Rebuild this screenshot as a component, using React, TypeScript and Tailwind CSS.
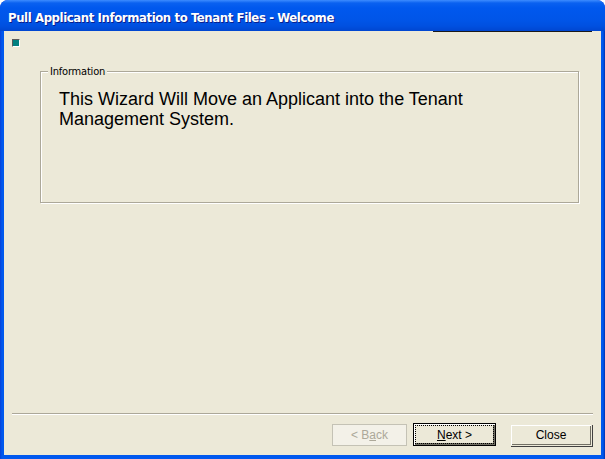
import React from "react";

export default function App() {
  return (
    <div className="w-[605px] h-[459px] overflow-hidden bg-white">
      <div className="w-[605px] h-[459px] flex flex-col rounded-t-[8px] overflow-hidden bg-[#0831d9]">
        {/* Title bar */}
        <div className="h-[31px] shrink-0 flex items-center pl-[8px] pt-[5px] bg-[linear-gradient(to_bottom,#3d8cff_0px,#0a61f0_3px,#0058ee_8px,#0055e8_20px,#0050e0_26px,#0046d0_31px)]">
          <span
            className="text-white text-[13px] font-bold tracking-[-0.4px] [text-shadow:1px_1px_0_#0a1e8c]"
            style={{ fontFamily: '"Trebuchet MS", "DejaVu Sans Condensed", "Liberation Sans", sans-serif' }}
          >
            Pull Applicant Information to Tenant Files - Welcome
          </span>
        </div>
        {/* Body with borders */}
        <div className="flex-1 flex px-[4px] pb-[4px] bg-[linear-gradient(to_right,#0840d8,#0058ee_2px,#0058ee_calc(100%-2px),#0030b0)]">
          <div
            className="flex-1 flex flex-col bg-[#ece9d8] relative"
            style={{ fontFamily: '"Liberation Sans", Arial, sans-serif' }}
          >
            <div className="absolute top-0 left-[429px] w-[159px] h-[1px] bg-[#1a1a1a]" />
            <div className="h-[8px]" />
            <div className="pl-[8px] flex">
              <div className="w-[8px] h-[8px] bg-[#008080] border-t border-l border-[#5a5a5a] border-r-white border-b-white" style={{ borderRightWidth: 1, borderBottomWidth: 1, borderRightStyle: "solid", borderBottomStyle: "solid" }} />
            </div>
            {/* Group box */}
            <div className="mt-[24px] ml-[36px] mr-[22px] h-[132px] relative border border-[#aca899] shadow-[inset_1px_1px_0_#fff,1px_1px_0_#fff]">
              <span
                className="absolute -top-[7px] left-[7px] px-[2px] bg-[#ece9d8] text-[11px] leading-[13px] text-black tracking-[-0.2px]"
                style={{ fontFamily: 'Tahoma, "DejaVu Sans Condensed", "Liberation Sans", sans-serif' }}
              >
                Information
              </span>
              <div className="pt-[17px] pl-[18px] text-[18px] leading-[20px] text-black">
                This Wizard Will Move an Applicant into the Tenant
                <br />
                Management System.
              </div>
            </div>
            <div className="flex-1" />
            {/* Separator */}
            <div className="mx-[8px] h-[2px] border-t border-[#aca899]" style={{ borderBottomWidth: 1, borderBottomStyle: "solid", borderBottomColor: "#fff" }} />
            <div className="flex justify-end items-center pt-[8px] pb-[9px] pr-[9px] gap-0 text-[12px]">
              <div className="w-[75px] h-[22px] flex items-center justify-center text-[#aca899] border border-[#c4c2b5] bg-[#f3f1e8]">
                <span>
                  &lt; B<span className="underline">a</span>ck
                </span>
              </div>
              <div className="ml-[6px] w-[83px] h-[23px] border border-black p-[1px] bg-[#ece9d8] shadow-[inset_1px_1px_0_#fff,inset_-2px_-2px_0_#716f64]">
                <div className="w-full h-full flex items-center justify-center border border-dotted border-black">
                  <span>
                    <span className="underline">N</span>ext &gt;
                  </span>
                </div>
              </div>
              <div className="ml-[14px] w-[82px] h-[22px] flex items-center justify-center bg-[#ece9d8] border border-[#ece9d8] shadow-[inset_1px_1px_0_#fff,inset_-1px_-1px_0_#716f64,1px_1px_0_#404040]">
                Close
              </div>
            </div>
          </div>
        </div>
      </div>
    </div>
  );
}
